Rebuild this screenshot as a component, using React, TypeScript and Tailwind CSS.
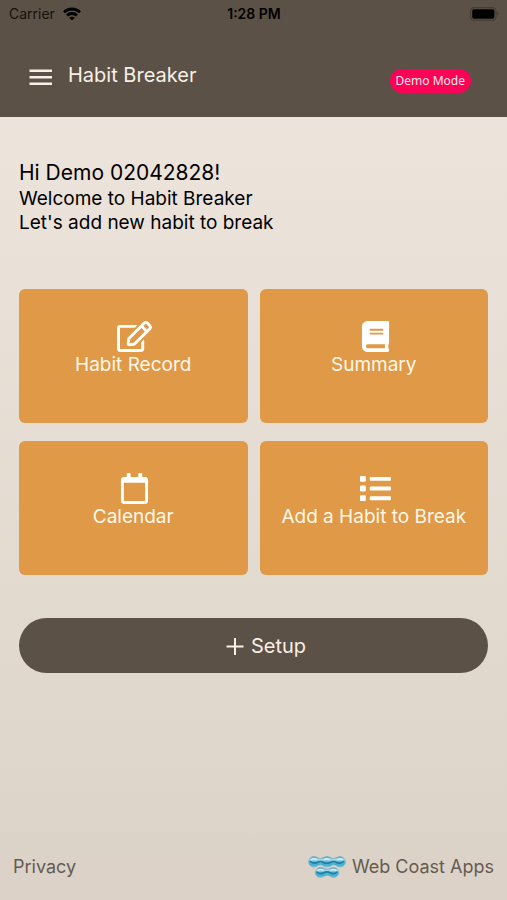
import type { IconType } from 'react-icons'
import { FaBook, FaList, FaRegCalendar, FaRegEdit } from 'react-icons/fa'

interface Tile { label: string; icon: IconType }

const tiles: Tile[] = [
  { label: 'Habit Record', icon: FaRegEdit },
  { label: 'Summary', icon: FaBook },
  { label: 'Calendar', icon: FaRegCalendar },
  { label: 'Add a Habit to Break', icon: FaList },
]

function WifiIcon() {
  return (
    <svg className="w-[18px] h-[14px]" viewBox="0 0 18 14" fill="none" stroke="#000" strokeWidth={2.8} aria-hidden="true">
      <path d="M1 5.2C5.4.9 12.6.9 17 5.2" />
      <path d="M4 8.500c2.800-2.700 7.200-2.700 10 0" />
      <path d="M9 13.400 6.200 10.800c1.600-1.500 4-1.500 5.600 0z" fill="#000" stroke="none" />
    </svg>
  )
}

function BatteryIcon() {
  return (
    <svg className="w-[29px] h-[14px]" viewBox="0 0 29 14" aria-hidden="true">
      <rect x="0.6" y="0.6" width="25.4" height="12.8" rx="3.6" fill="none" stroke="#453c34" strokeWidth="1.2" />
      <rect x="2.2" y="2.2" width="22.2" height="9.6" rx="1.8" fill="#000" />
      <path d="M27.2 5v4c1.6-.7 1.6-3.3 0-4z" fill="#453c34" />
    </svg>
  )
}

function WaveLogo() {
  return (
    <svg className="w-[38px] h-[22px]" viewBox="0 0 38 22" aria-hidden="true">
      <defs>
        <linearGradient id="wave" x1="0" y1="0" x2="0" y2="1">
          <stop offset="0" stopColor="#4f9dbb" />
          <stop offset="0.3" stopColor="#a5d9e8" />
          <stop offset="0.5" stopColor="#5fb4d0" />
          <stop offset="0.8" stopColor="#3fb0d4" />
          <stop offset="1" stopColor="#7fc4d8" />
        </linearGradient>
      </defs>
      <g fill="url(#wave)" stroke="#6aaec6" strokeWidth="0.5">
        <path d="M6 .5c2.800 0 4 1.900 6.300 1.900S16 .5 19 .5s4.400 1.900 6.700 1.900S29.200.5 32 .5s5.500 2.400 5.500 5.300-2.700 5.300-5.500 5.300-4-2.300-6.300-2.300S22 11.100 19 11.100s-4.400-2.300-6.700-2.300S8.800 11.100 6 11.100.5 8.700.5 5.800 3.200.5 6 .5z" />
        <path d="M12.500 11.400c2.800 0 4.200 1.700 6.500 1.700s3.700-1.700 6.500-1.700 5.300 2.200 5.300 5-2.500 5.100-5.300 5.100-4.200-2.200-6.500-2.200-3.700 2.200-6.500 2.200-5.300-2.300-5.300-5.100 2.500-5 5.300-5z" />
      </g>
      {/* dark crest running through each row, with the highlight above it */}
      <g fill="none" strokeLinecap="round">
        <path d="M2.500 5.600c2.500 1.900 4.800 1.900 7.300.6s3.200-1.200 5.200 0 5.500 1.200 7.800 0 3.200-1.300 5.400 0 4.800 1.300 7.300-.6M9 16.200c2.300 1.900 4.500 1.800 6.700.6s4.300-1.200 6.500 0 4.500 1.300 6.700-.6" stroke="#1c7fa6" strokeWidth="1.600" />
        <path d="M3.500 3.600c1.500-1 3.500-1 5 0M16.500 3.600c1.500-1 3.500-1 5 0M29.500 3.600c1.500-1 3.500-1 5 0M10 14.200c1.500-1 3.500-1 5 0M23 14.200c1.500-1 3.500-1 5 0" stroke="#d3eff6" strokeWidth="1.400" />
      </g>
    </svg>
  )
}

export default function App() {
  return (
    <div className="min-h-screen flex flex-col bg-linear-to-b from-[#efe6de] to-[#dcd3c8] font-[Inter,sans-serif] text-black">
      <header className="bg-[#5c5146]">
        {/* Status bar */}
        <div className="grid grid-cols-3 items-center h-7 pl-[9px] pr-2 text-sm">
          <div className="flex items-center gap-2 text-[#15110d]">
            <span>Carrier</span>
            <WifiIcon />
          </div>
          <span className="text-center font-semibold">1:28 PM</span>
          <div className="flex justify-end">
            <BatteryIcon />
          </div>
        </div>

        {/* Title bar */}
        <div className="flex items-center h-[89px] pl-7 pr-9 text-[#f8f0e8]">
          <button type="button" aria-label="Menu" className="p-px mt-2">
            <svg className="w-6 h-5" viewBox="0 0 24 20" fill="none" stroke="currentColor" strokeWidth="2.600" aria-hidden="true">
              <path d="M.5 3.800h22.500M.5 10.300h22.500M.5 16.800h22.500" />
            </svg>
          </button>
          <h1 className="flex-1 ml-3.5 mt-1 text-xl leading-6">Habit Breaker</h1>
          <span className="rounded-full bg-[#fb0257] mt-4 px-1.5 text-xs leading-6 text-[#ffe9ec] font-['Noto_Sans',sans-serif]">Demo Mode</span>
        </div>
      </header>

      <main className="flex-1 px-[19px] pt-[42px]">
        <h2 className="text-[21px] leading-7">Hi Demo 02042828!</h2>
        <p className="text-[19px] leading-6">Welcome to Habit Breaker</p>
        <p className="text-[19px] leading-6">Let's add new habit to break</p>

        {/* Feature tiles */}
        <div className="grid grid-cols-2 gap-x-3 gap-y-[18px] mt-[54px]">
          {tiles.map(({ label, icon: Icon }) => (
            <button
              key={label}
              type="button"
              className="flex flex-col items-center min-h-[134px] rounded-md bg-[#e09946] pt-8 text-[19px] leading-[26px] text-[#fff7ea]"
            >
              <Icon className="w-[35px] h-[31px] ml-[3px] text-white" aria-hidden="true" />
              <span>{label}</span>
            </button>
          ))}
        </div>

        <button type="button" className="flex items-center justify-center gap-1.5 w-full h-[55px] mt-[43px] pl-6 rounded-full bg-[#5c5146] text-xl text-[#f8f0e8]">
          <svg className="w-5 h-5" viewBox="0 0 20 20" fill="none" stroke="currentColor" strokeWidth="2" aria-hidden="true">
            <path d="M10 2v17M1.500 10.500h17" />
          </svg>
          Setup
        </button>
      </main>

      <footer className="flex items-center justify-between h-[67px] px-[13px] bg-[#dcd3c8]/40 text-lg text-[#655b50]">
        <a href="#privacy">Privacy</a>
        <a href="#about" className="flex items-center gap-1.5">
          <WaveLogo />
          Web Coast Apps
        </a>
      </footer>
    </div>
  )
}
